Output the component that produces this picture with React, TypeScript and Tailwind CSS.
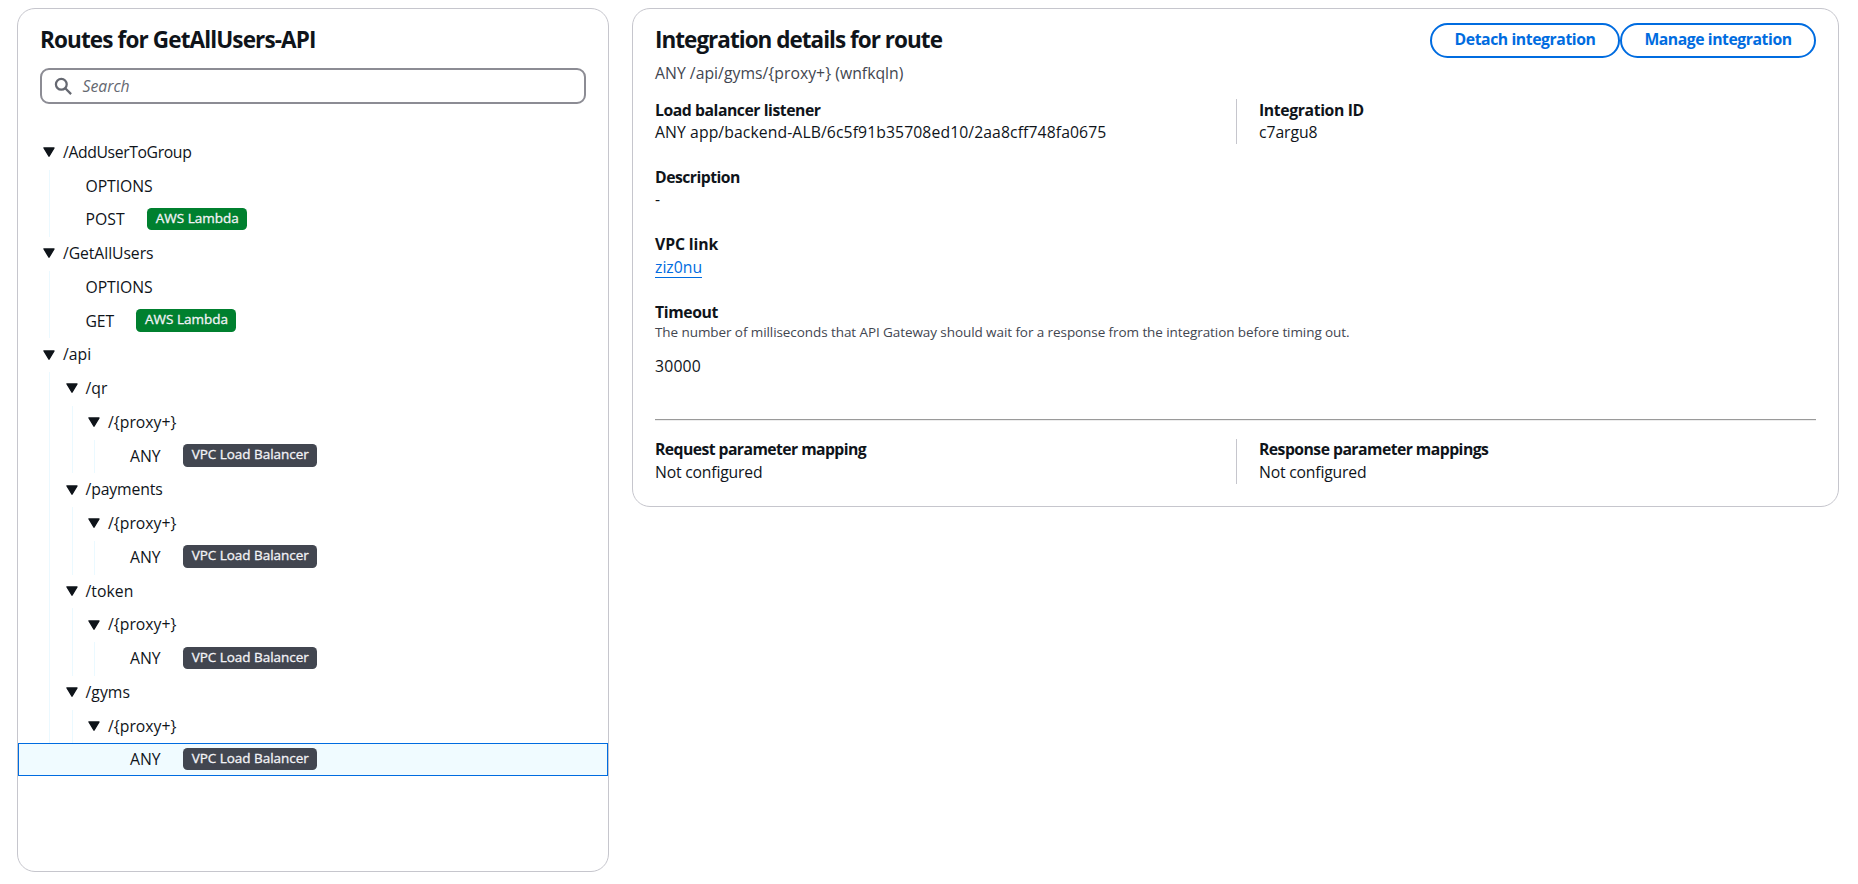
type Node = {
  label: string;
  track: string;
  badge?: { text: string; green?: boolean };
  selected?: boolean;
  children?: Node[];
};

const lambda = { text: "AWS Lambda", green: true };
const vpc = { text: "VPC Load Balancer" };

const proxy = (selected = false): Node => ({
  label: "/{proxy+}",
  track: "tracking-[0.02px]",
  children: [{ label: "ANY", track: "tracking-[0px]", badge: vpc, selected }],
});

const tree: Node[] = [
  {
    label: "/AddUserToGroup",
    track: "tracking-[-0.38px]",
    children: [
      { label: "OPTIONS", track: "tracking-[-0.08px]" },
      { label: "POST", track: "tracking-[0.05px]", badge: lambda },
    ],
  },
  {
    label: "/GetAllUsers",
    track: "tracking-[-0.08px]",
    children: [
      { label: "OPTIONS", track: "tracking-[-0.08px]" },
      { label: "GET", track: "tracking-[-0.1px]", badge: lambda },
    ],
  },
  {
    label: "/api",
    track: "tracking-[0px]",
    children: [
      { label: "/qr", track: "tracking-[0px]", children: [proxy()] },
      { label: "/payments", track: "tracking-[-0.14px]", children: [proxy()] },
      { label: "/token", track: "tracking-[0.05px]", children: [proxy()] },
      { label: "/gyms", track: "tracking-[0.05px]", children: [proxy(true)] },
    ],
  },
];

const rowPad = ["pl-[25px]", "pl-[48px]", "pl-[70px]", "pl-[92px]"];
const leafPad = ["pl-[45px]", "pl-[67.5px]", "pl-[90px]", "pl-[112px]"];
const guidePos = ["left-[31px]", "left-[54px]", "left-[76px]"];
const caretGap = ["gap-[8px]", "gap-[7.5px]", "gap-[8px]"];

function Row({ node, depth }: { node: Node; depth: number }) {
  const open = !!node.children;
  return (
    <>
      <div
        className={
          "flex items-start " +
          (open ? rowPad[depth] + " " + caretGap[depth] : leafPad[depth]) +
          (node.selected
            ? " relative h-[33px] bg-[#f0fbff] outline-1 -outline-offset-1 outline-[#006ce0]"
            : " h-[33.75px]")
        }
      >
        {open && (
          <svg className="mt-[11.25px] h-[10px] w-[12px] shrink-0" viewBox="0 0 12 10">
            <path d="M1 0.9h10L6 9.2z" fill="#0f141a" stroke="#0f141a" strokeWidth="1.4" strokeLinejoin="round" />
          </svg>
        )}
        <span className={"leading-[32px] whitespace-nowrap " + node.track}>{node.label}</span>
        {node.badge && (
          <span
            className={
              "mt-[4.5px] ml-[22px] flex h-[22.5px] items-start rounded-[4.5px] px-[9px] text-[13.5px] leading-[21px] whitespace-nowrap text-[#f3f3f7] [-webkit-text-stroke:0.3px_#f3f3f7] " +
              (node.badge.green
                ? "w-[100px] bg-[#00802f] tracking-[0px]"
                : "w-[134px] bg-[#424650] tracking-[-0.03px]")
            }
          >
            {node.badge.text}
          </span>
        )}
      </div>
      {node.children && (
        <div className="relative">
          <span className={"absolute inset-y-0 w-px bg-[#ebf9ff] " + guidePos[depth]} />
          {node.children.map((c, i) => (
            <Row key={i} node={c} depth={depth + 1} />
          ))}
        </div>
      )}
    </>
  );
}

function Field({ label, lt, value, vt }: { label: string; lt: string; value: string; vt: string }) {
  return (
    <div className="leading-[22.5px] whitespace-nowrap">
      <div className={"font-bold " + lt}>{label}</div>
      <div className={vt}>{value}</div>
    </div>
  );
}

const button =
  "h-[35px] rounded-full border-2 border-[#006ce0] text-center leading-[29px] font-bold text-[#006ce0] whitespace-nowrap ";

export default function App() {
  return (
    <main className="flex h-[884px] w-[1858px] items-start gap-[23px] overflow-hidden bg-white pt-[8px] pl-[17px] font-['Open_Sans','Noto_Sans',sans-serif] text-[15.75px] text-[#0f141a]">
      <section className="h-[864px] w-[592px] shrink-0 rounded-[18px] border border-[#c6c6cd] pt-[17px]">
        <h2 className="ml-[22px] text-[22.5px] leading-[27px] font-bold tracking-[-0.87px] whitespace-nowrap">
          Routes for GetAllUsers-API
        </h2>
        <label className="mt-[15px] ml-[22px] flex h-[36px] w-[546px] items-center rounded-[9px] border-2 border-[#8c8c94] pl-[12px] text-[#656871]">
          <svg className="h-[18px] w-[18px] shrink-0" viewBox="0 0 16 16" fill="none" stroke="#656871" strokeWidth="2">
            <circle cx="6.5" cy="6.5" r="4.8" />
            <path d="M15.2 15.2l-5.2-5.2" />
          </svg>
          <span className="ml-[10.5px] leading-[30px] italic">Search</span>
        </label>
        <div className="mt-[31.75px]">
          {tree.map((n, i) => (
            <Row key={i} node={n} depth={0} />
          ))}
        </div>
      </section>

      <section className="h-[499px] w-[1207px] shrink-0 rounded-[18px] border border-[#c6c6cd] px-[22px]">
        <header className="flex items-start justify-between">
          <div className="whitespace-nowrap">
            <h2 className="mt-[17px] text-[22.5px] leading-[27px] font-bold tracking-[-0.98px]">
              Integration details for route
            </h2>
            <p className="mt-[8.5px] leading-[22.5px] tracking-[0.03px] text-[#424650]">
              ANY /api/gyms/&#123;proxy+&#125; (wnfkqln)
            </p>
          </div>
          <div className="mt-[14px] flex">
            <button className={button + "w-[190px] pb-[2px] tracking-[-0.42px]"}>Detach integration</button>
            <button className={button + "w-[196px] pb-[2px] tracking-[-0.44px]"}>Manage integration</button>
          </div>
        </header>

        <div className="mt-[14.5px] flex h-[45px]">
          <div className="w-[581px]">
            <Field
              label="Load balancer listener"
              lt="tracking-[-0.45px]"
              value="ANY app/backend-ALB/6c5f91b35708ed10/2aa8cff748fa0675"
              vt="tracking-[0.09px]"
            />
          </div>
          <div className="mr-[22px] h-[45px] w-px bg-[#c6c6cd]" />
          <Field label="Integration ID" lt="tracking-[-0.37px]" value="c7argu8" vt="tracking-[-0.06px]" />
        </div>

        <div className="mt-[22px]">
          <Field label="Description" lt="tracking-[-0.52px]" value="-" vt="" />
        </div>
        <div className="mt-[22.5px] leading-[22.5px]">
          <div className="font-bold tracking-[-0.1px]">VPC link</div>
          <a className="inline-block h-[22px] border-b border-[#006ce0] text-[#006ce0]">ziz0nu</a>
        </div>
        <div className="mt-[23px] whitespace-nowrap">
          <div className="leading-[22.5px] font-bold tracking-[-0.38px]">Timeout</div>
          <p className="-mt-px text-[13.5px] leading-[18px] tracking-[-0.08px] text-[#424650]">
            The number of milliseconds that API Gateway should wait for a response from the integration before timing
            out.
          </p>
          <p className="mt-[14px] leading-[22.5px] tracking-[0.2px]">30000</p>
        </div>

        <hr className="mt-[42px] h-[2px] border-0 border-t border-[#9a9a9a] bg-[#ededed]" />

        <div className="mt-[17.5px] flex">
          <div className="-mt-[0.5px] w-[581px]">
            <Field label="Request parameter mapping" lt="tracking-[-0.57px]" value="Not configured" vt="tracking-[-0.2px]" />
          </div>
          <div className="mr-[22px] h-[45px] w-px bg-[#c6c6cd]" />
          <div className="-mt-[0.5px]">
            <Field label="Response parameter mappings" lt="tracking-[-0.54px]" value="Not configured" vt="tracking-[-0.2px]" />
          </div>
        </div>
      </section>
    </main>
  );
}
